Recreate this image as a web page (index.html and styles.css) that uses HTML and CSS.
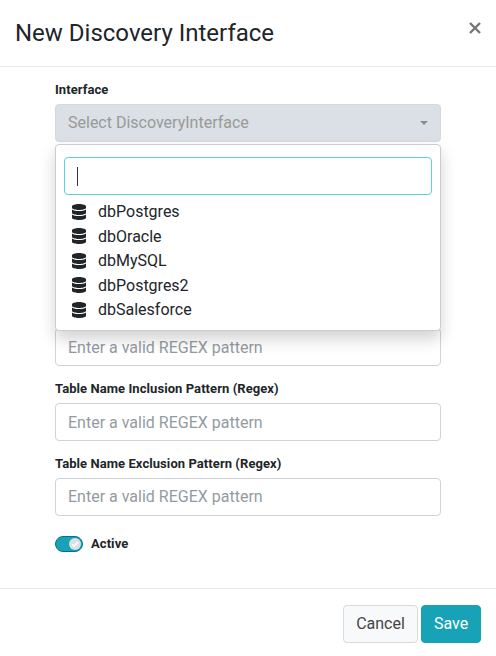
FILE: index.html
```html
<!DOCTYPE html>
<html lang="en">
<head>
<meta charset="utf-8">
<title>New Discovery Interface</title>
<link rel="stylesheet" href="styles.css">
</head>
<body>
<svg class="defs" width="0" height="0" aria-hidden="true">
  <symbol id="database" viewBox="0 0 448 512"><path fill="currentColor" d="M448 73.143v45.714C448 159.143 347.667 192 224 192S0 159.143 0 118.857V73.143C0 32.857 100.333 0 224 0s224 32.857 224 73.143zM448 176v102.857C448 319.143 347.667 352 224 352S0 319.143 0 278.857V176c48.125 33.143 136.208 48.572 224 48.572S399.874 209.143 448 176zm0 160v102.857C448 479.143 347.667 512 224 512S0 479.143 0 438.857V336c48.125 33.143 136.208 48.572 224 48.572S399.874 369.143 448 336z"/></symbol>
</svg>
<div class="modal">
  <header class="modal-header">
    <h1 class="title">New Discovery Interface</h1>
    <button class="close" aria-label="Close"><svg width="12" height="12" viewBox="0 0 12 12"><path d="M1 1L11 11M11 1L1 11"/></svg></button>
  </header>
  <main class="modal-body">
    <div class="field">
      <div class="label">Interface</div>
      <div class="control select"><span>Select DiscoveryInterface</span><i class="caret"></i></div>
      <div class="menu">
        <div class="search"><i class="cursor"></i></div>
        <ul class="options">
          <li><svg><use href="#database"/></svg>dbPostgres</li>
          <li><svg><use href="#database"/></svg>dbOracle</li>
          <li><svg><use href="#database"/></svg>dbMySQL</li>
          <li><svg><use href="#database"/></svg>dbPostgres2</li>
          <li><svg><use href="#database"/></svg>dbSalesforce</li>
        </ul>
      </div>
    </div>
    <div class="field"><div class="label"></div><div class="control"></div></div>
    <div class="field"><div class="label"></div><div class="control"></div></div>
    <div class="field"><div class="label"></div><div class="control">Enter a valid REGEX pattern</div></div>
    <div class="field"><div class="label">Table Name Inclusion Pattern (Regex)</div><div class="control">Enter a valid REGEX pattern</div></div>
    <div class="field"><div class="label">Table Name Exclusion Pattern (Regex)</div><div class="control">Enter a valid REGEX pattern</div></div>
    <div class="switch-row">
      <span class="switch"><svg class="knob" viewBox="0 0 12 12"><path d="M3.2 6.3L5.2 8.1L8.9 4"/></svg></span>
      <span class="switch-label">Active</span>
    </div>
  </main>
  <footer class="modal-footer">
    <button class="btn cancel">Cancel</button>
    <button class="btn save">Save</button>
  </footer>
</div>
</body>
</html>
```
FILE: styles.css
```css
* { box-sizing: border-box; }
body { margin: 0; background: #fff; color: #212529; font: 16px/24px Roboto, sans-serif; overflow: hidden; }
.defs { position: absolute; }
.modal { height: 656px; display: flex; flex-direction: column; }
.modal-header { height: 67px; flex: none; padding: 0 15px; display: flex; justify-content: space-between; border-bottom: 1px solid #e6e8ea; }
.title { margin: 15px 0 0; font-size: 24px; font-weight: 400; line-height: 36px; }
.close { margin: 21.5px 0 0; padding: 0; width: 12px; height: 12px; border: 0; background: none; display: block; }
.close svg { display: block; fill: none; stroke: #777; stroke-width: 2.4; }
.modal-body { flex: 1; padding: 13px 55px 0; }
.field { position: relative; height: 74.8px; }
.label { height: 24px; font-size: 13px; line-height: 20px; font-weight: 700; letter-spacing: .07px; }
.control { height: 38px; padding: .7px 12px 0; border: 1px solid #ced4da; border-radius: 4px; display: flex; align-items: center; color: #939ba2; }
.select { justify-content: space-between; background: #dae0e5; border-color: #d3d9df; color: #999; }
.caret { border: 4px solid transparent; border-top-color: #8a8d90; border-bottom: 0; }
.menu { position: absolute; z-index: 2; top: 64px; left: 0; right: 0; height: 187px; padding: 12px 8px; background: #fff; border: 1px solid #ccc; border-radius: 4px; box-shadow: 0 8px 16px rgba(0, 0, 0, .18); }
.search { height: 38px; padding: 0 12px; border: 1px solid #5bd3e6; border-radius: 4px; display: flex; align-items: center; }
.cursor { width: 1px; height: 19px; background: #333; }
.options { list-style: none; margin: 5px 0 0; padding: 0 8px; }
.options li { height: 24.5px; display: flex; align-items: center; }
.options svg { width: 14px; height: 16px; margin: -1.5px 12px 0 0; flex: none; }
.switch-row { display: flex; align-items: center; height: 20px; margin-top: 5px; }
.switch { width: 28px; height: 16px; padding-right: 1px; border: 1px solid #087180; border-radius: 8px; background: #17a2b8; display: flex; align-items: center; justify-content: flex-end; }
.knob { width: 12px; height: 12px; border-radius: 50%; background: #dce0e4; fill: none; stroke: #fff; stroke-width: 1.5; }
.switch-label { margin-left: 8px; font-size: 13px; font-weight: 700; letter-spacing: .07px; }
.modal-footer { height: 68px; flex: none; padding: 16px 15px 0; display: flex; justify-content: flex-end; gap: 3px; border-top: 1px solid #e6e8ea; }
.btn { height: 38px; padding: 0 12px; border: 1px solid #d8dbde; border-radius: 4px; font: 16px/24px Roboto, sans-serif; }
.cancel { width: 75px; background: #f8f9fa; color: #444; }
.save { width: 60px; background: #17a2b8; border-color: #17a2b8; color: #fff; }
```
